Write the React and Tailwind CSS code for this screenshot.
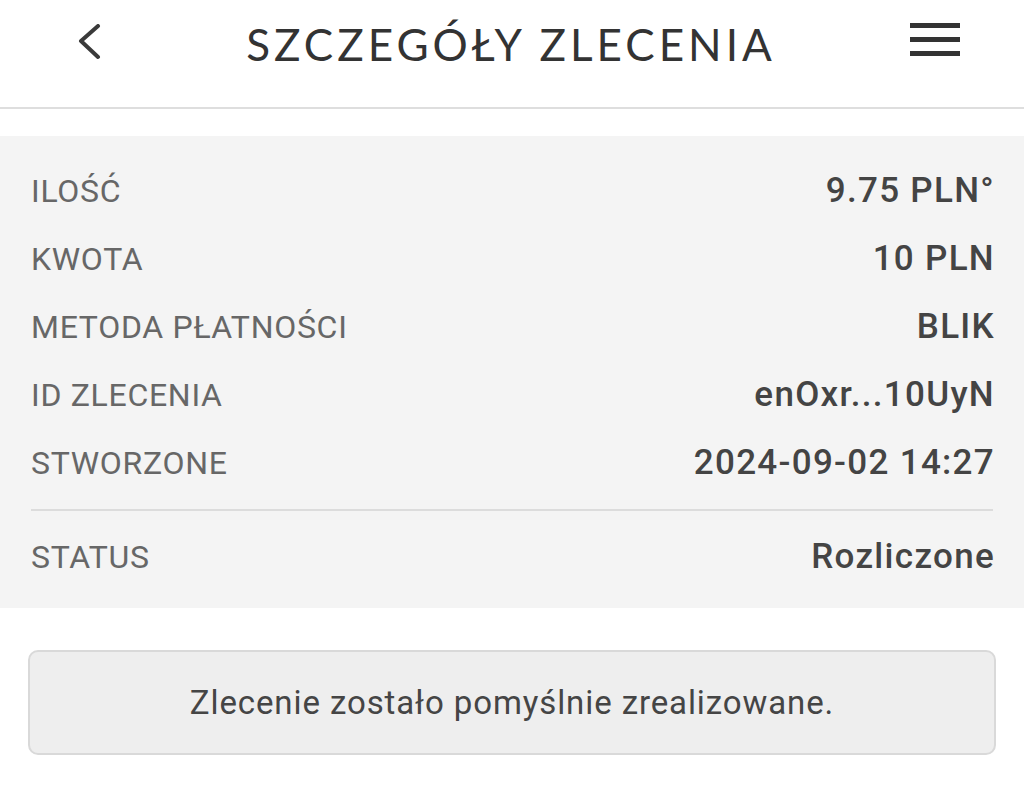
export default function App() {
  const rows = [
    ["ILOŚĆ", "9.75 PLN°"],
    ["KWOTA", "10 PLN"],
    ["METODA PŁATNOŚCI", "BLIK"],
    ["ID ZLECENIA", "enOxr...10UyN"],
    ["STWORZONE", "2024-09-02 14:27"],
  ];

  return (
    <div className="w-[1024px] h-[803px] bg-white font-['Roboto',sans-serif]">
      <header className="h-[109px] border-b-2 border-[#dedede] flex items-center px-[78px] pb-[20px]">
        <svg width="24" height="36" viewBox="0 0 24 36" className="-mt-[3px] shrink-0">
          <path d="M20 2 L3 17 L20 33" fill="none" stroke="#3a3a3a" strokeWidth="4" strokeLinecap="round" strokeLinejoin="round" />
        </svg>
        <h1 className="flex-1 text-center ml-[10px] font-['Lato',sans-serif] text-[44px] tracking-[4px] text-[#333] leading-none">
          SZCZEGÓŁY ZLECENIA
        </h1>
        <div className="flex flex-col gap-[9px] w-[50px] -mr-[14px] -mt-[8px] shrink-0">
          <span className="h-[5px] bg-[#333]" />
          <span className="h-[5px] bg-[#333]" />
          <span className="h-[5px] bg-[#333]" />
        </div>
      </header>

      <section className="mt-[27px] bg-[#f4f4f4] pt-[21px] pb-[17px] pl-[31px] pr-[29px]">
        {rows.map(([label, value]) => (
          <div key={label} className="h-[68px] flex items-center justify-between">
            <span className="text-[32px] tracking-[0.7px] text-[#676767]">{label}</span>
            <span className="text-[35px] tracking-[1.3px] font-medium text-[#444]">{value}</span>
          </div>
        ))}
        <div className="mt-[12px] mr-[2px] h-[2px] bg-[#dcdcdc]" />
        <div className="mt-[12px] h-[68px] flex items-center justify-between">
          <span className="text-[32px] tracking-[0.7px] text-[#676767]">STATUS</span>
          <span className="text-[35px] tracking-[1.3px] font-medium text-[#444]">Rozliczone</span>
        </div>
      </section>

      <div className="mt-[42px] mx-[28px] h-[105px] rounded-[10px] border-2 border-[#d9d9d9] bg-[#eeeeee] flex items-center justify-center">
        <p className="text-[33px] tracking-[0.9px] text-[#454545]">Zlecenie zostało pomyślnie zrealizowane.</p>
      </div>
    </div>
  );
}
